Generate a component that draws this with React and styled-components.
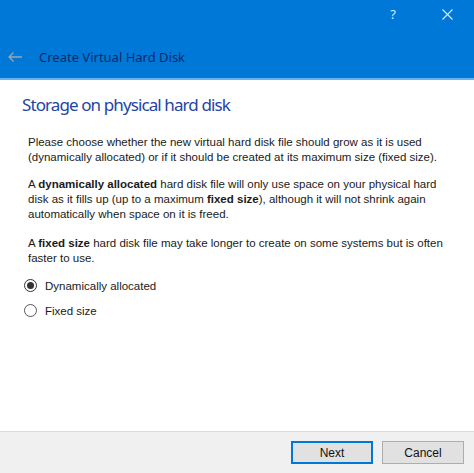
import React from "react";
import styled, { createGlobalStyle } from "styled-components";

const Global = createGlobalStyle`
  html, body, #root {
    margin: 0;
    padding: 0;
    height: 100%;
  }
  body {
    background: #ffffff;
    font-family: "Liberation Sans", Arial, sans-serif;
  }
`;

const Window = styled.div`
  display: flex;
  flex-direction: column;
  height: 100vh;
  background: #fff;
`;

const Header = styled.div`
  height: 78px;
  background: #0078d7;
  border-bottom: 2px solid #63b4f0;
  display: flex;
  flex-direction: column;
`;

const Caption = styled.div`
  height: 28px;
  display: flex;
  justify-content: flex-end;
  align-items: center;
`;

const CaptionButton = styled.div`
  width: 54px;
  height: 28px;
  display: flex;
  align-items: center;
  justify-content: center;
  color: #d7e9fb;
  font-family: "Noto Sans", sans-serif;
  font-size: 13px;
`;

const TitleRow = styled.div`
  flex: 1;
  display: flex;
  align-items: center;
  padding: 8px 0 0 7px;
  gap: 16px;
`;

const Title = styled.div`
  font-family: "Noto Sans", sans-serif;
  font-size: 13px;
  color: #0d2a6c;
`;

const Content = styled.div`
  flex: 1;
  padding: 13px 22px 0 22px;
`;

const Heading = styled.h1`
  margin: 0 0 18px 0;
  font-family: "Noto Sans", sans-serif;
  font-weight: 400;
  font-size: 17px;
  line-height: 24px;
  letter-spacing: -0.9px;
  color: #2444a4;
`;

const Body = styled.div`
  padding-left: 6px;
  font-size: 11.5px;
  color: #1a1a1a;
`;

const Para = styled.p`
  margin: 0 0 ${(p) => p.gap || 12}px 0;
  line-height: 15px;
  b {
    font-weight: 700;
  }
`;

const Options = styled.div`
  display: flex;
  flex-direction: column;
  gap: 10px;
  margin-top: 8px;
  margin-left: -4px;
`;

const Option = styled.label`
  display: flex;
  align-items: center;
  gap: 8px;
  font-size: 11.5px;
  color: #1a1a1a;
  height: 15px;
`;

const RadioCircle = styled.span`
  width: 13px;
  height: 13px;
  box-sizing: border-box;
  border-radius: 50%;
  border: 1px solid ${(p) => (p.checked ? "#333" : "#555")};
  display: flex;
  align-items: center;
  justify-content: center;
  background: #fff;
  &::after {
    content: "";
    width: 7px;
    height: 7px;
    border-radius: 50%;
    background: #333;
    display: ${(p) => (p.checked ? "block" : "none")};
  }
`;

const Footer = styled.div`
  height: 41px;
  background: #f0f0f0;
  border-top: 1px solid #dcdcdc;
  display: flex;
  justify-content: flex-end;
  align-items: center;
  gap: 9px;
  padding-right: 10px;
`;

const Button = styled.button`
  width: 82px;
  height: 23px;
  box-sizing: border-box;
  background: #e1e1e1;
  border: ${(p) => (p.primary ? "2px solid #0078d7" : "1px solid #adadad")};
  font-family: "Liberation Sans", Arial, sans-serif;
  font-size: 12px;
  color: #111;
  padding: 0;
`;

function BackArrow() {
  return (
    <svg width="16" height="12" viewBox="0 0 16 12">
      <path d="M15 6H2M6.5 1.5L2 6l4.5 4.5" fill="none" stroke="#9aa6b6" strokeWidth="1.3" />
    </svg>
  );
}

function CloseIcon() {
  return (
    <svg width="11" height="11" viewBox="0 0 11 11">
      <path d="M0.5 0.5L10.5 10.5M10.5 0.5L0.5 10.5" stroke="#dbeafb" strokeWidth="1.1" />
    </svg>
  );
}

export default function App() {
  return (
    <Window>
      <Global />
      <Header>
        <Caption>
          <CaptionButton>?</CaptionButton>
          <CaptionButton>
            <CloseIcon />
          </CaptionButton>
        </Caption>
        <TitleRow>
          <BackArrow />
          <Title>Create Virtual Hard Disk</Title>
        </TitleRow>
      </Header>
      <Content>
        <Heading>Storage on physical hard disk</Heading>
        <Body>
          <Para>
            Please choose whether the new virtual hard disk file should grow as it is used
            (dynamically allocated) or if it should be created at its maximum size (fixed size).
          </Para>
          <Para gap={14}>
            A <b>dynamically allocated</b> hard disk file will only use space on your physical hard
            disk as it fills up (up to a maximum <b>fixed size</b>), although it will not shrink again
            automatically when space on it is freed.
          </Para>
          <Para>
            A <b>fixed size</b> hard disk file may take longer to create on some systems but is often
            faster to use.
          </Para>
          <Options>
            <Option>
              <RadioCircle checked />
              Dynamically allocated
            </Option>
            <Option>
              <RadioCircle />
              Fixed size
            </Option>
          </Options>
        </Body>
      </Content>
      <Footer>
        <Button primary>Next</Button>
        <Button>Cancel</Button>
      </Footer>
    </Window>
  );
}
